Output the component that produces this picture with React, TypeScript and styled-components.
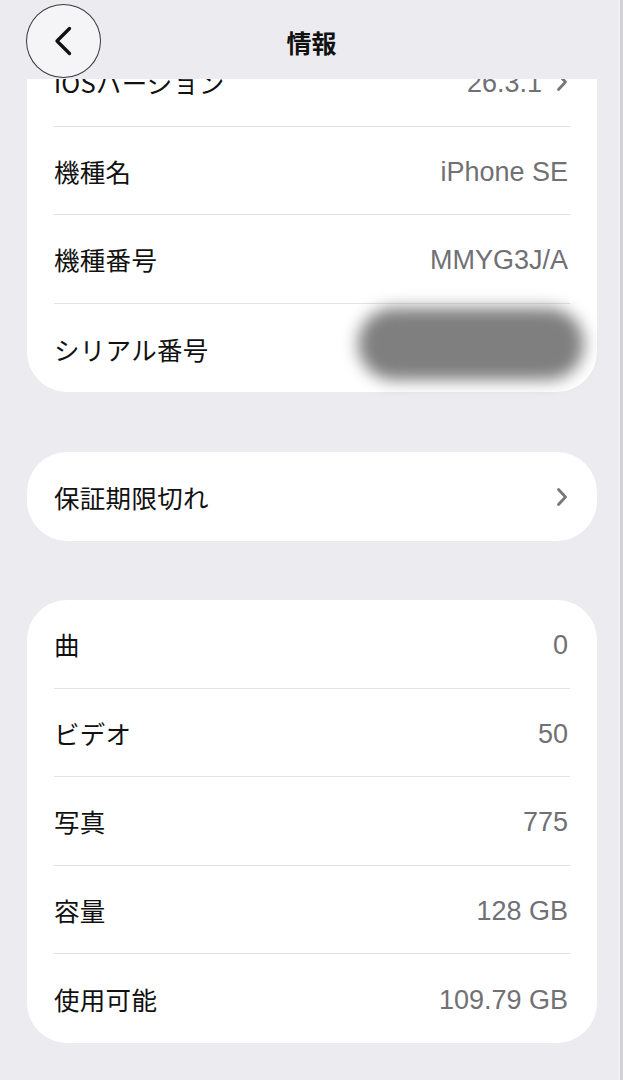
import React from "react";
import styled, { createGlobalStyle } from "styled-components";

const GlobalStyle = createGlobalStyle`
  html, body {
    margin: 0;
    padding: 0;
    background: #ebebf0;
  }
  body {
    font-family: "Liberation Sans", "Noto Sans CJK JP", sans-serif;
    -webkit-font-smoothing: antialiased;
  }
`;

type RowType = {
  label: string;
  value?: string;
  chevron?: boolean;
  hidden?: boolean;
};

const deviceRows: RowType[] = [
  { label: "iOSバージョン", value: "26.3.1", chevron: true },
  { label: "機種名", value: "iPhone SE" },
  { label: "機種番号", value: "MMYG3J/A" },
  { label: "シリアル番号", hidden: true },
];

const mediaRows: RowType[] = [
  { label: "曲", value: "0" },
  { label: "ビデオ", value: "50" },
  { label: "写真", value: "775" },
  { label: "容量", value: "128 GB" },
  { label: "使用可能", value: "109.79 GB" },
];

const Chevron = ({ size = 20 }: { size?: number }) => (
  <svg width={size * 0.6} height={size} viewBox="0 0 12 20" fill="none">
    <path
      d="M2.5 2.5 L9.5 10 L2.5 17.5"
      stroke="#76767b"
      strokeWidth="2.8"
      strokeLinecap="round"
      strokeLinejoin="round"
    />
  </svg>
);

const BackIcon = () => (
  <svg width="24" height="30" viewBox="0 0 24 30" fill="none">
    <path
      d="M18.5 2.5 L6 15 L18.5 27.5"
      stroke="#111"
      strokeWidth="3.3"
      strokeLinecap="round"
      strokeLinejoin="round"
    />
  </svg>
);

const Section = ({ rows }: { rows: RowType[] }) => (
  <Card>
    {rows.map((row, i) => (
      <Row key={i} last={i === rows.length - 1}>
        <Label>{row.label}</Label>
        {row.hidden ? (
          <Redaction />
        ) : (
          <Value>
            {row.value}
            {row.chevron && <Chevron />}
          </Value>
        )}
      </Row>
    ))}
  </Card>
);

const App = () => {
  return (
    <>
      <GlobalStyle />
      <Header>
        <BackButton>
          <BackIcon />
        </BackButton>
        <Title>情報</Title>
        <span />
      </Header>
      <Page>
        <Section rows={deviceRows} />
        <Card>
          <Row last>
            <Label>保証期限切れ</Label>
            <Value>
              <Chevron />
            </Value>
          </Row>
        </Card>
        <Section rows={mediaRows} />
      </Page>
      <ScrollEdge />
    </>
  );
};

const Header = styled.header`
  position: fixed;
  top: 0;
  left: 0;
  right: 0;
  height: 79px;
  box-sizing: border-box;
  padding: 5px 26px 0 26px;
  background: #ebebf0;
  display: grid;
  grid-template-columns: 1fr auto 1fr;
  align-items: start;
  z-index: 2;
`;

const BackButton = styled.button`
  width: 75px;
  height: 74px;
  margin-top: -1px;
  border-radius: 50%;
  border: 1.2px solid #3a3a3c;
  background: #f5f5f7;
  display: flex;
  align-items: center;
  justify-content: center;
  padding: 0 2px 0 0;
  cursor: pointer;
`;

const Title = styled.h1`
  margin: 0;
  height: 74px;
  line-height: 74px;
  font-family: "Noto Sans CJK JP", sans-serif;
  font-size: 25px;
  font-weight: 700;
  color: #111;
`;

const Page = styled.main`
  box-sizing: border-box;
  min-height: 1080px;
  padding: 38px 26px 37px 27px;
  display: flex;
  flex-direction: column;
  gap: 60px;
`;

const Card = styled.section`
  background: #fff;
  border-radius: 40px;
  padding: 0 27px;
  & + & + & {
    margin-top: -1px;
  }
`;

const Row = styled.div<{ last?: boolean }>`
  height: 88.6px;
  box-sizing: border-box;
  display: flex;
  align-items: center;
  justify-content: space-between;
  border-bottom: ${({ last }) => (last ? "none" : "1.5px solid #e4e4e7")};
`;

const Label = styled.span`
  font-family: "Noto Sans CJK JP", sans-serif;
  font-size: 25.5px;
  color: #111;
  letter-spacing: 0.3px;
`;

const Value = styled.span`
  display: flex;
  align-items: center;
  gap: 14px;
  padding-top: 4px;
  margin-right: 2px;
  font-family: "Liberation Sans", sans-serif;
  font-size: 27px;
  color: #707075;
  svg {
    margin-top: -4px;
  }
`;

const Redaction = styled.span`
  width: 226px;
  height: 72px;
  margin: 0 -14px 8px 0;
  border-radius: 36px;
  background: #7f7f7f;
  filter: blur(8px);
`;

const ScrollEdge = styled.div`
  position: fixed;
  top: 0;
  right: 0;
  bottom: 0;
  width: 3px;
  background: #d2d2d7;
  border-left: 2px solid #f0f0f3;
  z-index: 3;
`;

export default App;
